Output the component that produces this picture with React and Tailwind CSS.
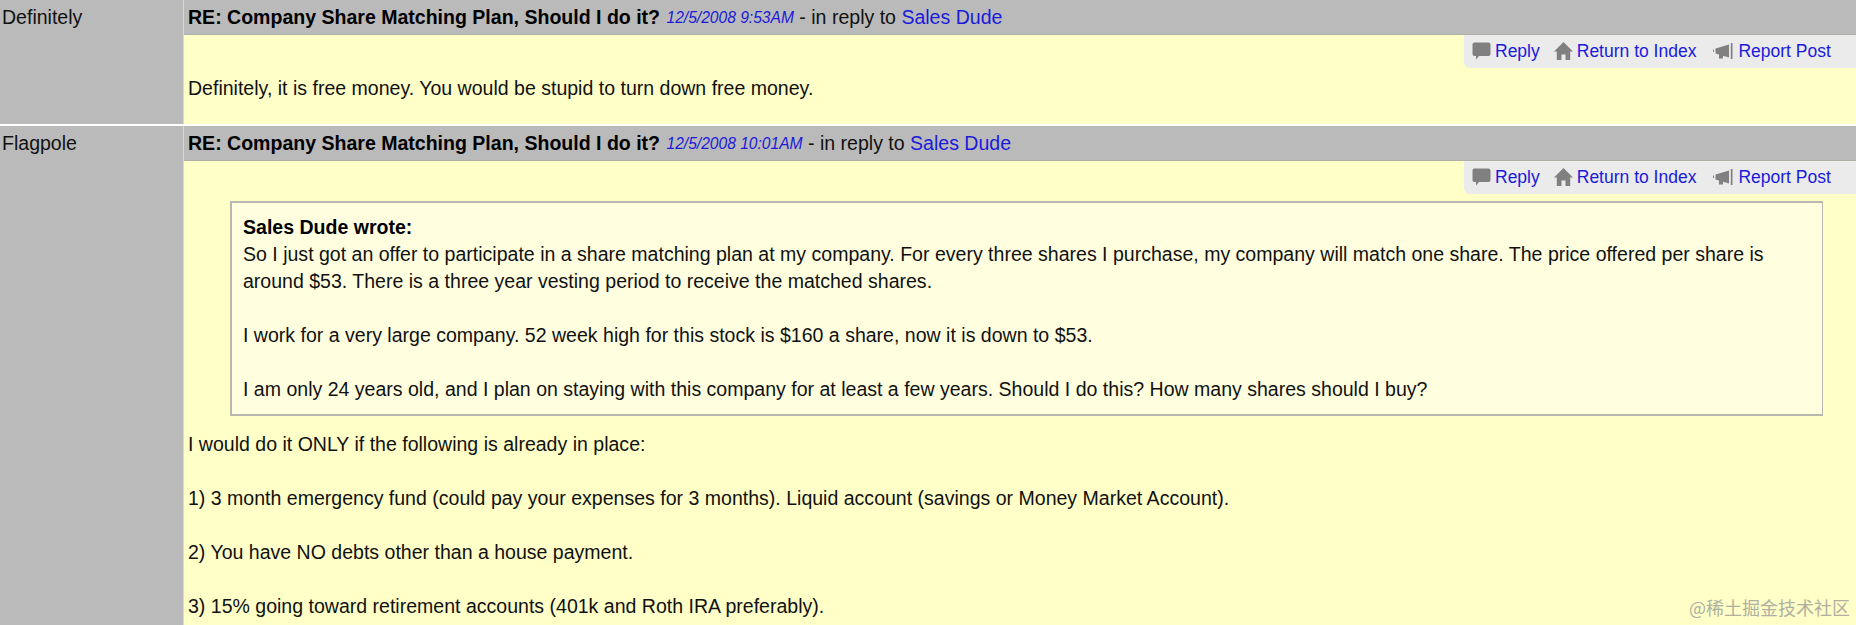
import React from "react";

const IconReply = () => (
  <svg width="19" height="19" viewBox="0 0 19 19" className="shrink-0" fill="#808080">
    <path d="M2.5 0.5h14a2 2 0 0 1 2 2v9.5a2 2 0 0 1-2 2H7l-3 3.5v-3.5H2.500a2 2 0 0 1-2-2V2.500a2 2 0 0 1 2-2z" />
  </svg>
);

const IconHome = () => (
  <svg width="19" height="19" viewBox="0 0 19 19" className="shrink-0" fill="#808080">
    <path d="M9.500 0 19 9.500h-2.800V18h-4.700v-5.500h-4V18H2.800V9.500H0z" />
  </svg>
);

const IconReport = () => (
  <svg width="20" height="19" viewBox="0 0 20 19" className="shrink-0" fill="#808080">
    <path d="M0 7.500h1v2.500H0zM2.500 6.500 16 2.500v13l-6-1.800v2.800H6v-4l-3.500-1zM17.800 1H19.500v16h-1.700z" />
  </svg>
);

const PostLinks = () => (
  <div className="flex justify-end">
    <div className="h-[33px] w-[392px] bg-[#ebebeb] rounded-bl-md flex items-center pl-[8px] text-[17.5px] text-[#1a1adb]">
      <IconReply />
      <a className="ml-[4px]">Reply</a>
      <span className="ml-[14px]"><IconHome /></span>
      <a className="ml-[4px]">Return to Index</a>
      <span className="ml-[17px]"><IconReport /></span>
      <a className="ml-[5px]">Report Post</a>
    </div>
  </div>
);

const PostHeader = ({ date }) => (
  <div className="h-[35px] bg-[#bababa] pl-[4px] flex items-center border-b border-[#b0b0a8] whitespace-pre">
    <b className="text-black">RE: Company Share Matching Plan, Should I do it?</b>
    <span> </span>
    <i className="ml-[1px] text-[15.6px] text-[#1a1adb]">{date}</i>
    <span> - in reply to </span>
    <a className="text-[#1a1adb]">Sales Dude</a>
  </div>
);

const Post = ({ author, date, children }) => (
  <div className="flex">
    <div className="w-[183px] shrink-0 bg-[#bababa] pl-[2px] pt-[3.5px]">{author}</div>
    <div className="flex-1 min-w-0 bg-[#ffffc8] border-l border-[#d8d8d0]">
      <PostHeader date={date} />
      <PostLinks />
      {children}
    </div>
  </div>
);

export default function App() {
  return (
    <div className="relative h-[625px] overflow-hidden bg-[#ffffc8] text-[19.55px] leading-[27px] text-[#111111] font-['Liberation_Sans',Arial,sans-serif]">
      <div className="flex flex-col gap-[2px] bg-white">
        <Post author="Definitely" date="12/5/2008 9:53AM">
          <p className="pl-[4px] pt-[7px] h-[56px]">
            Definitely, it is free money. You would be stupid to turn down free money.
          </p>
        </Post>
        <Post author="Flagpole" date="12/5/2008 10:01AM">
          <div className="ml-[46px] mr-[33px] mt-[7px] border-2 border-[#b8b8b0] border-r bg-[#ffffe0] px-[11px] py-[11px]">
            <b className="text-black">Sales Dude wrote:</b>
            <br />
            So I just got an offer to participate in a share matching plan at my company. For every three shares I purchase, my company will match one share. The price offered per share is around $53. There is a three year vesting period to receive the matched shares.
            <br />
            <br />
            I work for a very large company. 52 week high for this stock is $160 a share, now it is down to $53.
            <br />
            <br />
            I am only 24 years old, and I plan on staying with this company for at least a few years. Should I do this? How many shares should I buy?
          </div>
          <div className="pl-[4px] pt-[15px] pb-[40px]">
            I would do it ONLY if the following is already in place:
            <br />
            <br />
            1) 3 month emergency fund (could pay your expenses for 3 months). Liquid account (savings or Money Market Account).
            <br />
            <br />
            2) You have NO debts other than a house payment.
            <br />
            <br />
            3) 15% going toward retirement accounts (401k and Roth IRA preferably).
          </div>
        </Post>
      </div>
      <div className="absolute right-[6px] bottom-[6px] text-[18px] leading-[24px] text-[#b0b0a0] font-['Noto_Sans_CJK_SC',serif]">
        @稀土掘金技术社区
      </div>
    </div>
  );
}
